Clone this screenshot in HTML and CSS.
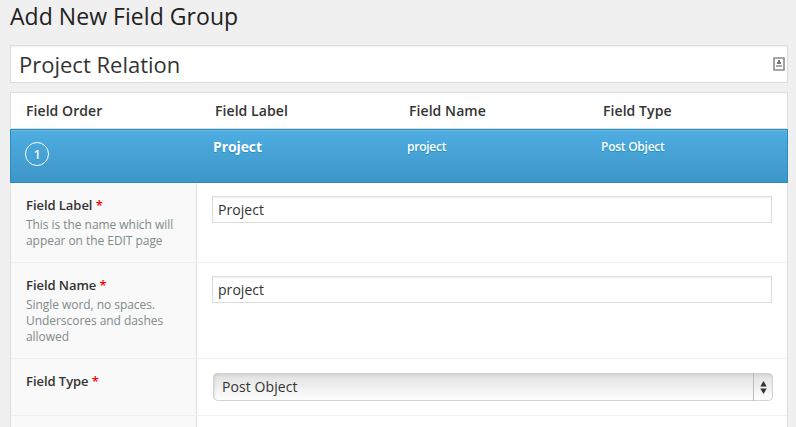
FILE: index.html
```html
<!DOCTYPE html>
<html lang="en">
<head>
<meta charset="utf-8">
<title>Add New Field Group</title>
<link rel="stylesheet" href="styles.css">
</head>
<body>
<h1 class="page-title">Add New Field Group</h1>
<div class="title-box"><span>Project Relation</span>
<svg class="badge" width="12" height="14" viewBox="0 0 12 14"><path d="M1 1h10v12H1z" fill="#fff" stroke="#8c8c8c" stroke-width="1.6"/><path d="M5 3h2v2h1v2H4V5h1z" fill="#777"/><path d="M3 8h6v2H3z" fill="#aaa"/></svg>
</div>
<main class="panel">
<div class="head"><span>Field Order</span><span>Field Label</span><span>Field Name</span><span>Field Type</span></div>
<div class="active"><div><span class="circle">1</span></div><div class="name">Project</div><div>project</div><div>Post Object</div></div>
<div class="row row-label"><div class="label"><b>Field Label <i>*</i></b><p>This is the name which will<br>appear on the EDIT page</p></div><div class="control"><div class="input">Project</div></div></div>
<div class="row row-name"><div class="label"><b>Field Name <i>*</i></b><p>Single word, no spaces.<br>Underscores and dashes<br>allowed</p></div><div class="control"><div class="input">project</div></div></div>
<div class="row row-type"><div class="label"><b>Field Type <i>*</i></b></div><div class="control"><div class="select"><span>Post Object</span><span class="arrows"><svg width="7" height="13" viewBox="0 0 7 13"><path d="M3.5 0L6.7 5.5H.3zM3.5 13L.3 7.5h6.4z" fill="#333"/></svg></span></div></div></div>
<div class="row row-next"><div class="label"></div><div class="control"></div></div>
</main>
</body>
</html>
```
FILE: styles.css
```css
* { box-sizing: border-box; }
body { margin: 0; padding: 0 8px 0 10px; height: 427px; overflow: hidden; background: #f0f0f0; color: #333; font-family: "Open Sans", sans-serif; }
.page-title { margin: 0; height: 45px; font-size: 23px; font-weight: 400; line-height: 32px; letter-spacing: .05px; color: #222; }
.title-box { display: flex; align-items: center; justify-content: space-between; height: 38px; padding: 0 2px 0 8px; border: 1px solid #ddd; background: #fff; box-shadow: inset 0 1px 2px rgba(0,0,0,.07); font-size: 22px; line-height: 36px; }
.panel { margin-top: 9px; height: 340px; border: 1px solid #dfdfdf; background: #fff; }
.head { display: grid; grid-template-columns: 189px 194px 194px 1fr; height: 36px; padding-left: 15px; border-bottom: 1px solid #e1e1e1; font-size: 14px; font-weight: 600; line-height: 35px; letter-spacing: .07px; }
.active { display: grid; grid-template-columns: 188px 194px 194px 1fr; height: 54px; margin: 0 -1px; padding-left: 14px; border: 1px solid #298cba; border-top-color: #2b8bb9; background: linear-gradient(#4fade1, #3d96c9); box-shadow: inset 0 1px #69bfec; color: #fff; font-size: 12px; font-weight: 600; line-height: 34px; letter-spacing: -.25px; text-shadow: 0 1px 1px #268fbb; }
.active .name { font-size: 14px; font-weight: 700; letter-spacing: -.1px; }
.circle { display: block; width: 24px; height: 24px; margin-top: 12px; border: 1px solid #fff; border-radius: 50%; font-size: 12px; line-height: 23px; text-align: center; font-weight: 600; }
.row { display: grid; grid-template-columns: 186px 1fr; border-bottom: 1px solid #f0f0f0; }
.row-label { height: 80px; }
.row-name { height: 96px; }
.row-type { height: 57px; }
.row-next { height: 20px; }
.label { padding: 12px 0 0 15px; background: #f9f9f9; border-right: 1px solid #e1e1e1; }
.label b { display: block; font-size: 13px; font-weight: 600; line-height: 20px; letter-spacing: -.05px; }
.label i { font-style: normal; color: red; }
.label p { margin: 2px 0 0; font-size: 12px; line-height: 16px; letter-spacing: -.05px; color: #808a8a; }
.control { padding: 13px 15px 0; }
.input { height: 27px; padding-left: 5px; border: 1px solid #ddd; box-shadow: inset 0 1px 2px rgba(0,0,0,.07); font-size: 14px; line-height: 25px; letter-spacing: .05px; }
.select { display: flex; justify-content: space-between; height: 28px; margin: 1px -1px 0 1px; padding-left: 9px; border-radius: 5px; background: linear-gradient(#e0e0e0, #fff); box-shadow: inset 0 0 0 1px #d2d2d2, inset 1px 2px 3px #ccc; font-size: 14px; line-height: 28px; letter-spacing: .08px; }
.arrows { display: flex; align-items: center; justify-content: center; width: 20px; padding-right: 1px; border-left: 1px solid #bbb; }
```
